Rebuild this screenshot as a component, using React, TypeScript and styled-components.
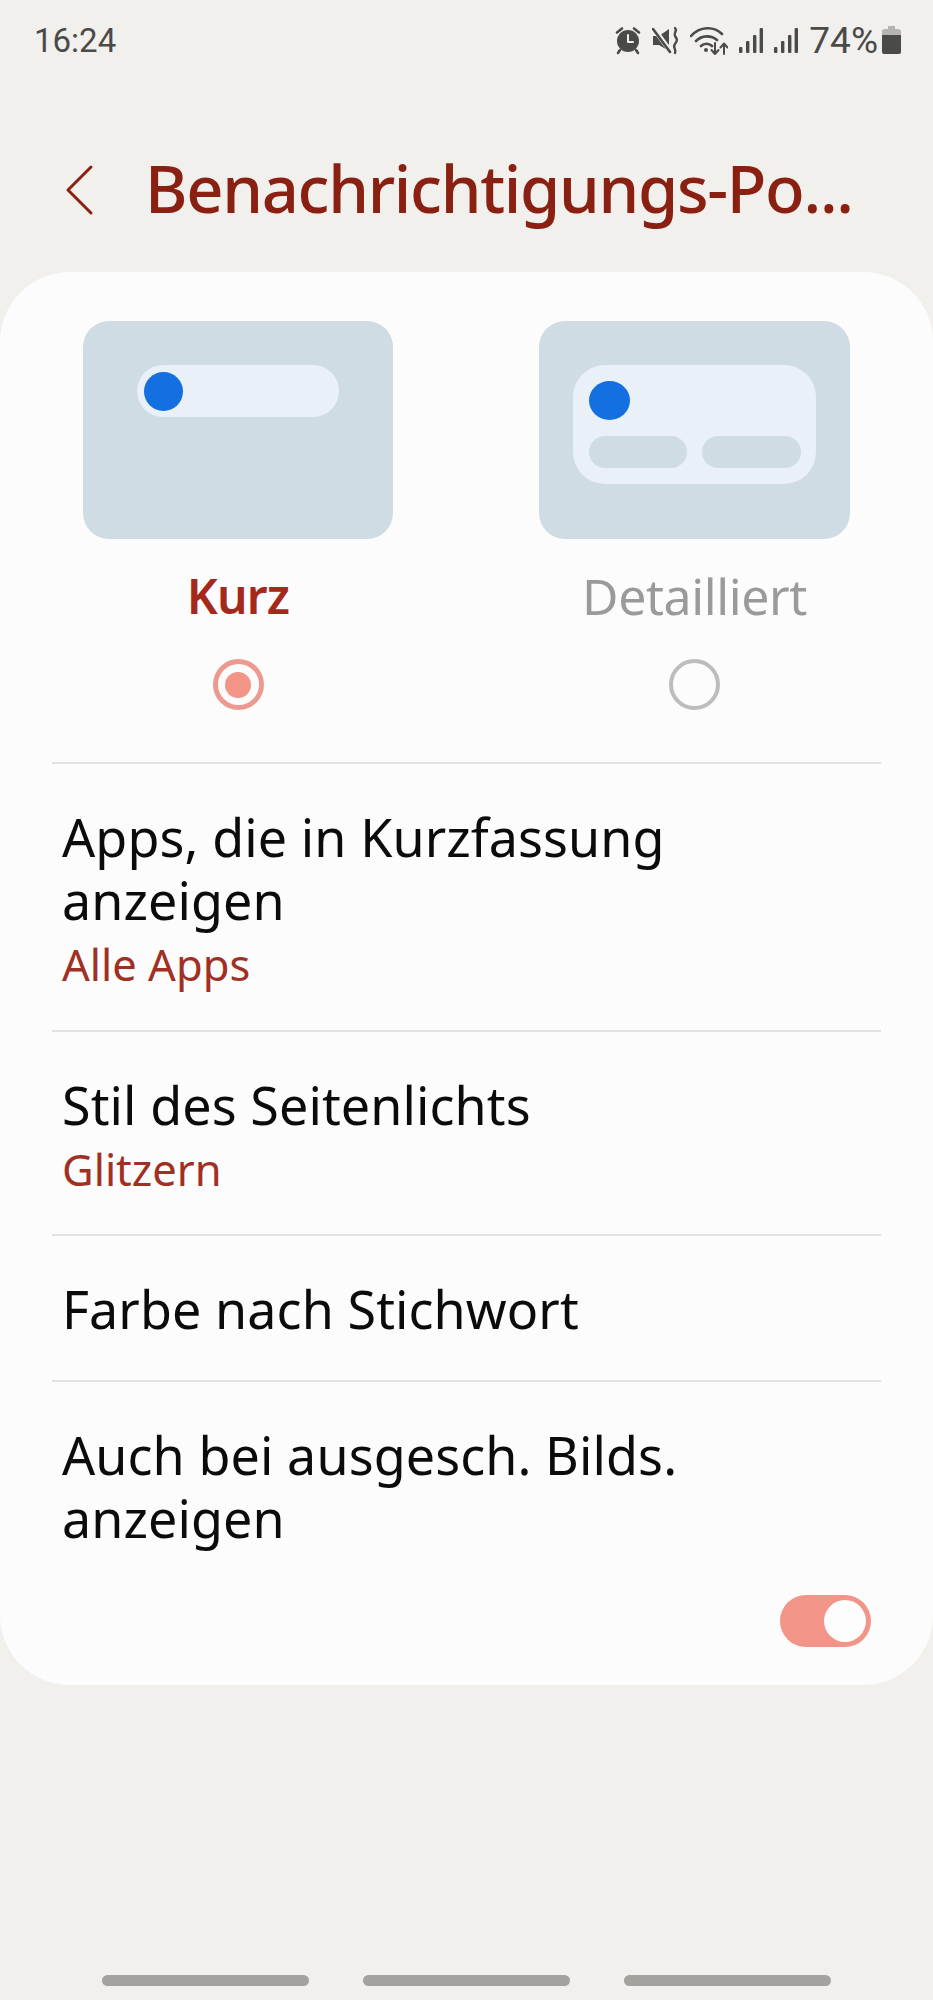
import React, { FC } from 'react';
import styled, { createGlobalStyle } from 'styled-components';

const GlobalStyle = createGlobalStyle`
  html, body {
    margin: 0;
    padding: 0;
    background: #f1f0ec;
  }
  * {
    box-sizing: border-box;
  }
`;

const Screen = styled.div`
  width: 933px;
  height: 2000px;
  background: #f1f0ec;
  font-family: "Noto Sans", "Open Sans", sans-serif;
  display: flex;
  flex-direction: column;
  overflow: hidden;
`;

const StatusBar = styled.div`
  height: 80px;
  padding: 0 32px 0 34px;
  display: flex;
  align-items: center;
  justify-content: space-between;
  color: #4a4a48;
`;

const Time = styled.span`
  font-family: "Roboto", sans-serif;
  font-size: 33px;
`;

const StatusIcons = styled.div`
  display: flex;
  align-items: center;
  gap: 11px;
`;

const Percent = styled.span`
  font-family: "Roboto", sans-serif;
  font-size: 37px;
  line-height: 30px;
  margin: 2px -7px 0 0;
`;

const Header = styled.header`
  height: 192px;
  padding: 0 0 0 64px;
  display: flex;
  align-items: flex-start;
  gap: 49px;
`;

const BackIcon = styled.svg`
  width: 32px;
  height: 52px;
  margin-top: 84px;
  flex: none;
`;

const Title = styled.h1`
  margin: 58px 0 0;
  font-size: 65px;
  line-height: 100px;
  font-weight: 500;
  color: #8a2012;
  letter-spacing: -1.3px;
  white-space: nowrap;
`;

const Card = styled.main`
  height: 1413px;
  background: #fcfcfc;
  border-radius: 70px;
  padding: 49px 52px 0;
`;

const Options = styled.div`
  display: grid;
  grid-template-columns: 310px 311px;
  justify-content: space-between;
  padding: 0 31px;
  height: 443px;
  border-bottom: 2px solid #e2e2e1;
`;

const Option = styled.div`
  display: flex;
  flex-direction: column;
  align-items: center;
`;

const Preview = styled.div`
  width: 100%;
  height: 218px;
  padding-top: 44px;
  border-radius: 26px;
  background: #cfdce3;
  display: flex;
  justify-content: center;
  align-items: flex-start;
`;

const ShortPill = styled.div`
  width: 202px;
  height: 52px;
  padding-left: 7px;
  border-radius: 26px;
  background: #e9f0f7;
  display: flex;
  align-items: center;
`;

const Dot = styled.div<{ $size: number }>`
  width: ${(p) => p.$size}px;
  height: ${(p) => p.$size}px;
  border-radius: 50%;
  background: #1470e0;
`;

const DetailPanel = styled.div`
  width: 243px;
  height: 119px;
  padding: 16px 15px 16px 16px;
  border-radius: 32px;
  background: #e9f0f7;
  display: flex;
  flex-direction: column;
  gap: 16px;
`;

const ActionRow = styled.div`
  display: grid;
  grid-template-columns: 98px 99px;
  justify-content: space-between;
`;

const ActionPill = styled.div`
  height: 32px;
  border-radius: 16px;
  background: #cfdce3;
`;

const OptionLabel = styled.div<{ $active?: boolean }>`
  margin-top: 25px;
  font-size: ${(p) => (p.$active ? 48 : 50)}px;
  line-height: 64px;
  font-weight: ${(p) => (p.$active ? 600 : 400)};
  color: ${(p) => (p.$active ? '#a5281a' : '#9a9a9a')};
  letter-spacing: ${(p) => (p.$active ? '-0.8px' : '-0.4px')};
`;

const Radio = styled.div<{ $active?: boolean }>`
  margin-top: 31px;
  width: 51px;
  height: 51px;
  border-radius: 50%;
  border: ${(p) => (p.$active ? '5px solid #ec9a8f' : '4px solid #bdbdbd')};
  display: flex;
  align-items: center;
  justify-content: center;
`;

const RadioDot = styled.div`
  width: 26px;
  height: 26px;
  border-radius: 50%;
  background: #f29488;
`;

const Row = styled.div<{ $height: number; $last?: boolean }>`
  height: ${(p) => p.$height}px;
  padding: 41px 10px 0;
  border-bottom: ${(p) => (p.$last ? 'none' : '2px solid #e2e2e1')};
`;

const RowTitle = styled.div`
  font-size: 52px;
  line-height: 63px;
  color: #0b0b0b;
  letter-spacing: 0.1px;
`;

const RowValue = styled.div`
  font-size: 43.500px;
  line-height: 66px;
  color: #a03023;
`;

const ToggleLine = styled.div`
  display: flex;
  justify-content: flex-end;
  margin: 46px 0 0 0;
`;

const Toggle = styled.div`
  width: 91px;
  height: 52px;
  padding: 5px;
  border-radius: 26px;
  background: #f29488;
  display: flex;
  justify-content: flex-end;
`;

const Knob = styled.div`
  width: 42px;
  height: 42px;
  border-radius: 50%;
  background: #fdfdfd;
`;

const NavBar = styled.nav`
  flex: 1;
  padding: 290px 102px 0;
  display: grid;
  grid-template-columns: repeat(3, 207px);
  justify-content: space-between;
`;

const NavLine = styled.div`
  height: 11px;
  border-radius: 6px;
  background: #a3a29e;
`;

const StatusSvg = styled.svg<{ $w: number }>`
  width: ${(p) => p.$w}px;
  height: 30px;
  display: block;
  flex: none;
`;

const AlarmIcon: FC = () => (
  <StatusSvg $w={26} viewBox="0 0 26 30" fill="none">
    <circle cx="13" cy="16" r="11" fill="#4a4a48" />
    <path d="M13 10v7h5" stroke="#f1f0ec" strokeWidth="2" strokeLinecap="round" strokeLinejoin="round" />
    <path d="M2 7.500 7 3.500M24 7.500 19 3.500M5 25 3 28M21 25l2 3" stroke="#4a4a48" strokeWidth="2.600" strokeLinecap="round" />
  </StatusSvg>
);

const MuteIcon: FC = () => (
  <StatusSvg $w={27} viewBox="0 0 27 30" fill="none">
    <path d="M1 11h6l10-7v22l-10-6H1z" fill="#4a4a48" />
    <path d="M2 4 19 27" stroke="#f1f0ec" strokeWidth="5" />
    <path d="M1 4 18 27" stroke="#4a4a48" strokeWidth="2.600" strokeLinecap="round" />
    <path d="M23 3c3 3-2 5 0 8s3 4 0 8 2 5 0 9" stroke="#4a4a48" strokeWidth="2.400" strokeLinecap="round" />
  </StatusSvg>
);

const WifiIcon: FC = () => (
  <StatusSvg $w={38} viewBox="0 0 38 30" fill="none">
    <path d="M1 11C10 1 24 1 32 9M6 16c6-6 15-6 21-1M11 21c3-3 8-3 11 0" stroke="#4a4a48" strokeWidth="2.600" strokeLinecap="round" />
    <circle cx="16" cy="25" r="2" fill="#4a4a48" />
    <path d="M25 18v11M21.500 25l3.500 4 3.500-4M34 29V19M30.500 22.500 34 18.500l3.500 4" stroke="#4a4a48" strokeWidth="2" strokeLinecap="round" strokeLinejoin="round" />
  </StatusSvg>
);

const SignalIcon: FC = () => (
  <StatusSvg $w={24} viewBox="0 0 24 30" fill="none">
    <rect x="0" y="22" width="3.400" height="6" rx="1" fill="#4a4a48" />
    <rect x="7" y="16" width="3.400" height="12" rx="1" fill="#4a4a48" />
    <rect x="14" y="10" width="3.400" height="18" rx="1" fill="#4a4a48" />
    <rect x="20.600" y="3" width="3.400" height="25" rx="1" fill="#4a4a48" />
  </StatusSvg>
);

const BatteryIcon: FC = () => (
  <StatusSvg $w={19} viewBox="0 0 19 30" fill="none">
    <path d="M6 1h7v3h3a3 3 0 0 1 3 3v3H0V7a3 3 0 0 1 3-3h3z" fill="#b5b4b0" />
    <path d="M0 10h19v17a2 2 0 0 1-2 2H2a2 2 0 0 1-2-2z" fill="#4a4a48" />
  </StatusSvg>
);

const App: FC = () => {
  return (
    <Screen>
      <GlobalStyle />
      <StatusBar>
        <Time>16:24</Time>
        <StatusIcons>
          <AlarmIcon />
          <MuteIcon />
          <WifiIcon />
          <SignalIcon />
          <SignalIcon />
          <Percent>74%</Percent>
          <BatteryIcon />
        </StatusIcons>
      </StatusBar>
      <Header>
        <BackIcon viewBox="0 0 32 52" fill="none">
          <path d="M27 3 4 26l23 23" stroke="#8a2012" strokeWidth="3" strokeLinecap="round" strokeLinejoin="round" />
        </BackIcon>
        <Title>Benachrichtigungs-Po...</Title>
      </Header>
      <Card>
        <Options>
          <Option>
            <Preview>
              <ShortPill>
                <Dot $size={39} />
              </ShortPill>
            </Preview>
            <OptionLabel $active>Kurz</OptionLabel>
            <Radio $active>
              <RadioDot />
            </Radio>
          </Option>
          <Option>
            <Preview>
              <DetailPanel>
                <Dot $size={41} />
                <ActionRow>
                  <ActionPill />
                  <ActionPill />
                </ActionRow>
              </DetailPanel>
            </Preview>
            <OptionLabel>Detailliert</OptionLabel>
            <Radio />
          </Option>
        </Options>
        <Row $height={268}>
          <RowTitle>
            Apps, die in Kurzfassung
            <br />
            anzeigen
          </RowTitle>
          <RowValue>Alle Apps</RowValue>
        </Row>
        <Row $height={204}>
          <RowTitle>Stil des Seitenlichts</RowTitle>
          <RowValue>Glitzern</RowValue>
        </Row>
        <Row $height={146}>
          <RowTitle>Farbe nach Stichwort</RowTitle>
        </Row>
        <Row $height={300} $last>
          <RowTitle>
            Auch bei ausgesch. Bilds.
            <br />
            anzeigen
          </RowTitle>
          <ToggleLine>
            <Toggle>
              <Knob />
            </Toggle>
          </ToggleLine>
        </Row>
      </Card>
      <NavBar>
        <NavLine />
        <NavLine />
        <NavLine />
      </NavBar>
    </Screen>
  );
};

export default App;
